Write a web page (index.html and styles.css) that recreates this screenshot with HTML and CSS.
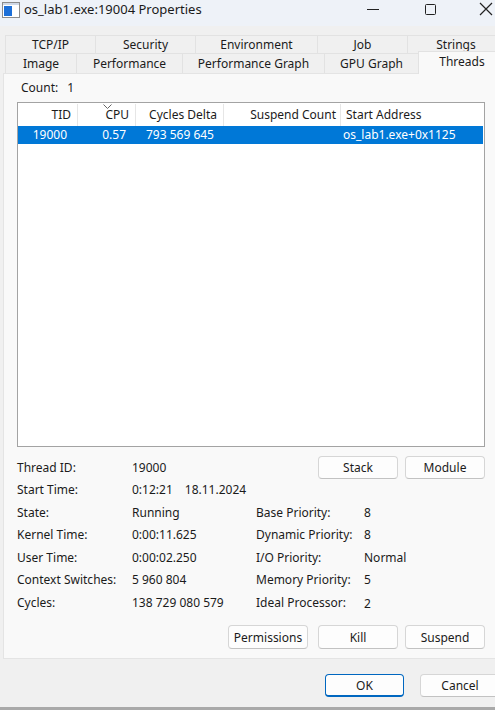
FILE: index.html
```html
<!DOCTYPE html>
<html>
<head>
<meta charset="utf-8">
<link rel="stylesheet" href="styles.css">
</head>
<body>
<div class="window">
  <div class="titlebar">
    <div class="title-left">
      <svg class="app-icon" width="18" height="16" viewBox="0 0 18 16">
        <rect x="0.5" y="0.5" width="17" height="15" fill="#ffffff" stroke="#8c8c8c"/>
        <rect x="1" y="1" width="16" height="2" fill="#cfd8e6"/>
        <rect x="2" y="4" width="8" height="10" fill="#1c6fd8"/>
      </svg>
      <span class="title-text">os_lab1.exe:19004 Properties</span>
    </div>
    <div class="controls">
      <div class="ctl"><svg width="14" height="14" viewBox="0 0 14 14"><line x1="1" y1="7.5" x2="13" y2="7.5" stroke="#222" stroke-width="1"/></svg></div>
      <div class="ctl"><svg width="14" height="14" viewBox="0 0 14 14"><rect x="2.5" y="2.5" width="10" height="10" rx="1" fill="none" stroke="#222" stroke-width="1"/></svg></div>
      <div class="ctl ctl-last"><svg width="14" height="14" viewBox="0 0 14 14"><path d="M1 1 L13 13 M13 1 L1 13" fill="none" stroke="#222" stroke-width="1.2"/></svg></div>
    </div>
  </div>

  <div class="tabs">
    <div class="tabrow row1">
      <div class="tab">TCP/IP</div>
      <div class="tab">Security</div>
      <div class="tab">Environment</div>
      <div class="tab">Job</div>
      <div class="tab">Strings</div>
    </div>
    <div class="tabrow row2">
      <div class="tab">Image</div>
      <div class="tab">Performance</div>
      <div class="tab">Performance Graph</div>
      <div class="tab">GPU Graph</div>
      <div class="tab active">Threads</div>
    </div>
  </div>

  <div class="panel">
    <div class="count"><span>Count:</span><span class="count-val">1</span></div>

    <div class="listbox">
      <div class="lv-row lv-header">
        <div class="c c1 r">TID</div>
        <div class="c c2 r">CPU<svg class="sort" width="9" height="5" viewBox="0 0 9 5"><path d="M0.5 0.5 L4.5 4.5 L8.5 0.5" fill="none" stroke="#666" stroke-width="1"/></svg></div>
        <div class="c c3 r">Cycles Delta</div>
        <div class="c c4 r">Suspend Count</div>
        <div class="c c5">Start Address</div>
      </div>
      <div class="lv-row lv-item selected">
        <div class="c c1 r">19000</div>
        <div class="c c2 r">0.57</div>
        <div class="c c3 r">793 569 645</div>
        <div class="c c4 r"></div>
        <div class="c c5">os_lab1.exe+0x1125</div>
      </div>
    </div>

    <div class="info">
      <div>Thread ID:</div>
      <div>19000</div>
      <div class="btn-cell">
        <button class="btn">Stack</button>
        <button class="btn gap7">Module</button>
      </div>

      <div>Start Time:</div>
      <div class="span3"><span>0:12:21</span><span class="date">18.11.2024</span></div>

      <div>State:</div><div>Running</div><div>Base Priority:</div><div>8</div>
      <div>Kernel Time:</div><div>0:00:11.625</div><div>Dynamic Priority:</div><div>8</div>
      <div>User Time:</div><div>0:00:02.250</div><div>I/O Priority:</div><div>Normal</div>
      <div>Context Switches:</div><div>5 960 804</div><div>Memory Priority:</div><div>5</div>
      <div>Cycles:</div><div>138 729 080 579</div><div>Ideal Processor:</div><div class="low">2</div>
    </div>

    <div class="actions">
      <button class="btn">Permissions</button>
      <button class="btn gap10">Kill</button>
      <button class="btn gap7">Suspend</button>
    </div>
  </div>

  <div class="footer">
    <button class="btn ok">OK</button>
    <button class="btn cancel">Cancel</button>
  </div>
</div>
<div class="behind"></div>
</body>
</html>
```

FILE: styles.css
```css
html, body {
  margin: 0;
  padding: 0;
}
body {
  width: 495px;
  height: 710px;
  overflow: hidden;
  background: #a9a9a9;
  font-family: "Segoe UI", "Noto Sans", "Open Sans", sans-serif;
  font-size: 12px;
  color: #1b1b1b;
}
.window {
  width: 507px;
  height: 707px;
  background: #f0f0f0;
  display: flex;
  flex-direction: column;
}
.titlebar {
  height: 26px;
  width: 495px;
  background: #eef2f8;
  display: flex;
  justify-content: space-between;
  align-items: flex-start;
  flex: none;
  box-shadow: 12px 0 0 #eef2f8;
}
.title-left {
  display: flex;
  align-items: center;
  height: 18px;
  padding-left: 2px;
}
.app-icon {
  display: block;
  margin-top: 1px;
}
.title-text {
  margin-left: 4px;
  font-size: 13px;
  color: #1a1a1a;
  line-height: 18px;
}
.controls {
  display: flex;
  height: 18px;
  flex: none;
}
.ctl {
  width: 57px;
  height: 18px;
  display: flex;
  align-items: center;
  justify-content: center;
}
.ctl-last {
  width: 37px;
  justify-content: flex-start;
  padding-left: 21px;
  box-sizing: border-box;
}
.ctl svg { display: block; flex: none; }

.tabs {
  margin-top: 9px;
  padding-left: 5px;
}
.tabrow {
  display: flex;
  align-items: flex-end;
}
.row1 { height: 18px; }
.row2 { height: 20px; }
.tab {
  box-sizing: border-box;
  flex: none;
  background: #f0f0f0;
  border: 1px solid #e2e2e2;
  border-bottom: none;
  text-align: center;
  color: #1b1b1b;
  white-space: nowrap;
}
.row1 .tab {
  height: 18px;
  line-height: 17px;
  margin-left: -1px;
}
.row2 .tab {
  height: 20px;
  line-height: 19px;
  margin-left: -1px;
}
.row1 .tab:first-child, .row2 .tab:first-child { margin-left: 0; }
.row1 .tab:nth-child(1) { width: 91px; }
.row1 .tab:nth-child(2) { width: 101px; }
.row1 .tab:nth-child(3) { width: 123px; }
.row1 .tab:nth-child(4) { width: 91px; }
.row1 .tab:nth-child(5) { width: 98px; }
.row2 .tab:nth-child(1) { width: 72px; }
.row2 .tab:nth-child(2) { width: 107px; }
.row2 .tab:nth-child(3) { width: 143px; }
.row2 .tab:nth-child(4) { width: 95px; }
.row2 .tab.active {
  width: 88px;
  height: 23px;
  margin-top: -2px;
  margin-bottom: -1px;
  line-height: 20px;
  background: #f9f9f9;
  position: relative;
  z-index: 1;
}

.panel {
  box-sizing: border-box;
  margin-left: 3px;
  width: 501px;
  height: 586px;
  background: #f9f9f9;
  border: 1px solid #e4e4e4;
  padding: 6px 18px 0 13px;
  display: flex;
  flex-direction: column;
}
.count {
  height: 16px;
  line-height: 16px;
  padding-left: 4px;
}
.count-val { margin-left: 9px; }

.listbox {
  box-sizing: border-box;
  margin-top: 6px;
  height: 345px;
  background: #ffffff;
  border: 1px solid #a3a3a3;
}
.lv-row {
  display: flex;
}
.lv-header {
  height: 23px;
  line-height: 22px;
  padding-top: 1px;
  box-sizing: border-box;
}
.lv-header .c {
  border-right: 1px solid #e6e6e6;
  box-sizing: border-box;
  padding-right: 6px;
  position: relative;
}
.lv-header .c5 { border-right: none; padding-left: 5px; }
.lv-header .c4 { padding-right: 4px; }
.c { white-space: nowrap; overflow: hidden; }
.c1 { width: 60px; }
.c2 { width: 58px; }
.c3 { width: 88px; }
.c4 { width: 117px; }
.c5 { flex: 1; }
.r { text-align: right; }
.sort {
  position: absolute;
  left: 25px;
  top: 0;
}
.lv-item {
  height: 18px;
  line-height: 18px;
  margin-right: 1px;
}
.lv-item .c { box-sizing: border-box; }
.lv-item .c1 { padding-right: 10px; width: 59px; }
.lv-item .c2 { padding-right: 9px; }
.lv-item .c3 { padding-right: 9px; }
.lv-item .c5 { padding-left: 3px; }
.selected {
  background: #0078d7;
  color: #ffffff;
}

.info {
  margin-top: 9px;
  display: grid;
  grid-template-columns: 115px 124px 108px 1fr;
  grid-auto-rows: 22.5px;
  align-items: center;
}
.btn-cell {
  grid-column: 3 / 5;
  display: flex;
  justify-content: flex-end;
}
.span3 { grid-column: 2 / 5; }
.date { margin-left: 12px; }
.low { padding-top: 2px; }

.btn {
  box-sizing: border-box;
  width: 80px;
  height: 23px;
  background: #fdfdfd;
  border: 1px solid #d6d6d6;
  border-bottom-color: #c2c2c2;
  border-radius: 4px;
  font-family: inherit;
  font-size: 12px;
  color: #1b1b1b;
  padding: 0;
  margin: 0;
}
.gap7 { margin-left: 7px; }
.gap10 { margin-left: 10px; }

.actions {
  margin-top: 11.5px;
  display: flex;
  justify-content: flex-end;
}
.actions .btn { height: 24px; }

.footer {
  margin-top: 15px;
  display: flex;
  justify-content: flex-end;
  padding-right: 7px;
}
.ok {
  width: 79px;
  border: 1px solid #0067c0;
  border-bottom-width: 2px;
}
.cancel { margin-left: 16px; }

.behind {
  height: 3px;
  background: #a9a9a9;
}
```
